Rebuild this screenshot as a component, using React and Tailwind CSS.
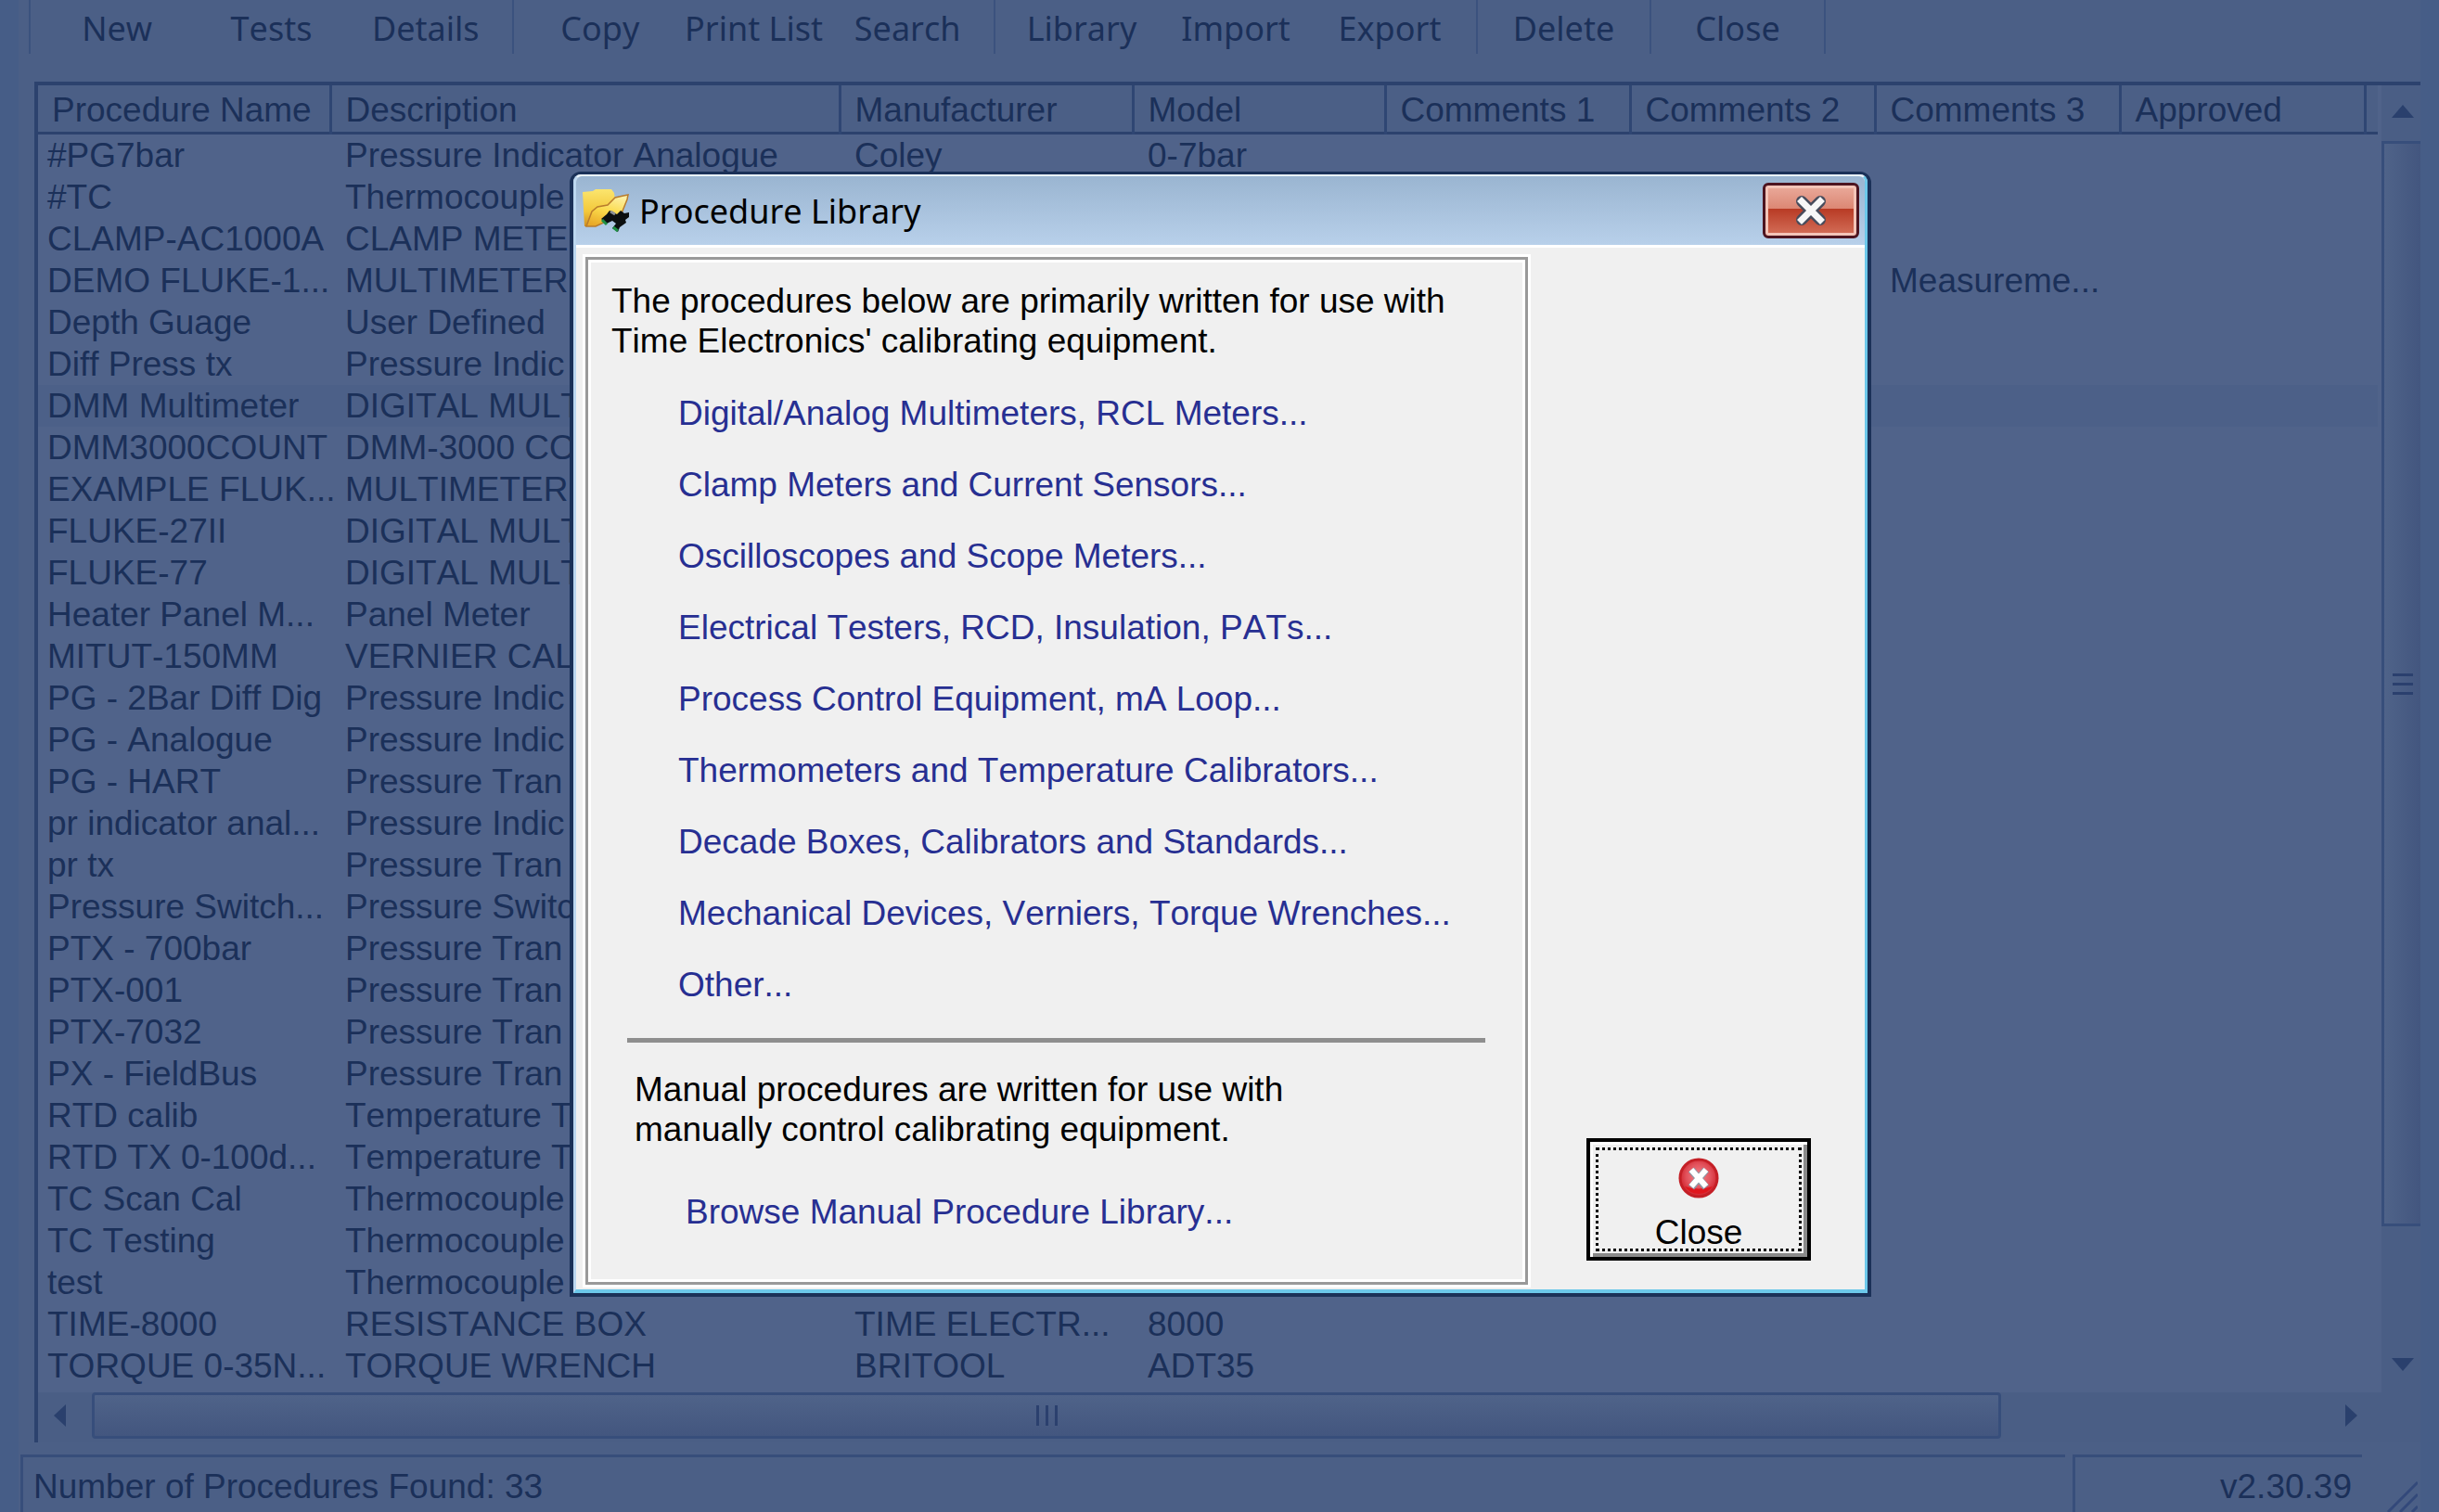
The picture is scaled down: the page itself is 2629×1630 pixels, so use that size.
import React from 'react';
import clsx from 'clsx';

const SANS = "font-['Liberation_Sans',Arial,sans-serif]";
const UI = "font-['Noto_Sans','Open_Sans',sans-serif]";

const TOOL_GROUPS = [
  { width: 'w-[521px]', items: ['New', 'Tests', 'Details'] },
  { width: 'w-[519px]', items: ['Copy', 'Print List', 'Search'] },
  { width: 'w-[520px]', items: ['Library', 'Import', 'Export'] },
  { width: 'w-[187px]', items: ['Delete'] },
  { width: 'w-[188px]', items: ['Close'] },
];

const COLUMNS = [
  { label: 'Procedure Name', width: 'w-[315px]' },
  { label: 'Description', width: 'w-[549px]' },
  { label: 'Manufacturer', width: 'w-[316px]' },
  { label: 'Model', width: 'w-[272px]' },
  { label: 'Comments 1', width: 'w-[264px]' },
  { label: 'Comments 2', width: 'w-[264px]' },
  { label: 'Comments 3', width: 'w-[264px]' },
  { label: 'Approved', width: 'w-[264px]' },
];

const PROCEDURES = [
  ['#PG7bar', 'Pressure Indicator Analogue', 'Coley', '0-7bar'],
  ['#TC', 'Thermocouple'],
  ['CLAMP-AC1000A', 'CLAMP METER'],
  ['DEMO FLUKE-1...', 'MULTIMETER', '', '', '', '', 'Measureme...'],
  ['Depth Guage', 'User Defined'],
  ['Diff Press tx', 'Pressure Indic'],
  ['DMM Multimeter', 'DIGITAL MULT'],
  ['DMM3000COUNT', 'DMM-3000 CO'],
  ['EXAMPLE FLUK...', 'MULTIMETER'],
  ['FLUKE-27II', 'DIGITAL MULT'],
  ['FLUKE-77', 'DIGITAL MULT'],
  ['Heater Panel M...', 'Panel Meter'],
  ['MITUT-150MM', 'VERNIER CAL'],
  ['PG - 2Bar Diff Dig', 'Pressure Indic'],
  ['PG - Analogue', 'Pressure Indic'],
  ['PG - HART', 'Pressure Tran'],
  ['pr indicator anal...', 'Pressure Indic'],
  ['pr tx', 'Pressure Tran'],
  ['Pressure Switch...', 'Pressure Switc'],
  ['PTX - 700bar', 'Pressure Tran'],
  ['PTX-001', 'Pressure Tran'],
  ['PTX-7032', 'Pressure Tran'],
  ['PX - FieldBus', 'Pressure Tran'],
  ['RTD calib', 'Temperature T'],
  ['RTD TX 0-100d...', 'Temperature T'],
  ['TC Scan Cal', 'Thermocouple'],
  ['TC Testing', 'Thermocouple'],
  ['test', 'Thermocouple'],
  ['TIME-8000', 'RESISTANCE BOX', 'TIME ELECTR...', '8000'],
  ['TORQUE 0-35N...', 'TORQUE WRENCH', 'BRITOOL', 'ADT35'],
];

const SELECTED = 'DMM Multimeter';

const CATEGORIES = [
  'Digital/Analog Multimeters, RCL Meters...',
  'Clamp Meters and Current Sensors...',
  'Oscilloscopes and Scope Meters...',
  'Electrical Testers, RCD, Insulation, PATs...',
  'Process Control Equipment, mA Loop...',
  'Thermometers and Temperature Calibrators...',
  'Decade Boxes, Calibrators and Standards...',
  'Mechanical Devices, Verniers, Torque Wrenches...',
  'Other...',
];

const FolderIcon = () => (
  <svg viewBox="0 0 52 48" className="h-12 w-[52px]" aria-hidden="true">
    <defs>
      <linearGradient id="folderBack" x1="0" y1="0" x2="0" y2="1">
        <stop offset="0" stopColor="#fbe56e" />
        <stop offset="0.6" stopColor="#f3c83a" />
        <stop offset="1" stopColor="#cf8f22" />
      </linearGradient>
      <linearGradient id="folderFront" x1="0.7" y1="0" x2="0.3" y2="1">
        <stop offset="0" stopColor="#fdf0a6" />
        <stop offset="0.5" stopColor="#fbdb4c" />
        <stop offset="1" stopColor="#e9a928" />
      </linearGradient>
    </defs>
    <path d="M1 4 L12 3 L15 1 L32 1 L35 5 L36 12 L14 28 L5 41 L3 41 Z" fill="url(#folderBack)" />
    <path d="M5 41 L11 25 L17 20 L28 18 L36 10 L45 8 L50 7 L49 12 L43 27 L30 34 L15 41 Z" fill="url(#folderFront)" stroke="#b97c2c" strokeWidth="1.5" />
    <path d="M21 33 L27 28 L30 24 L34 26 L38 28 L42 24 L46 27 L51 26 L51 31 L47 34 L48 37 L41 42 L39 47 L33 43 L37 38 L33 35 L27 38 Z" fill="#0c0f10" />
    <path d="M22 34 L27 39 M34 42 L39 46" stroke="#1f8f45" strokeWidth="3" />
    <path d="M31 25 L36 28" stroke="#8a8f94" strokeWidth="3" />
  </svg>
);

const TitleCloseIcon = () => (
  <svg viewBox="0 0 36 32" className="h-8 w-9" aria-hidden="true">
    <path d="M8 6 L28 26 M28 6 L8 26" stroke="#474c5c" strokeWidth="12" strokeLinecap="round" />
    <path d="M8 6 L28 26 M28 6 L8 26" stroke="#f7f7f7" strokeWidth="7" strokeLinecap="square" />
  </svg>
);

const CancelIcon = () => (
  <svg viewBox="0 0 44 44" className="size-11" aria-hidden="true">
    <defs>
      <radialGradient id="cancel" cx="0.5" cy="0.45" r="0.55">
        <stop offset="0" stopColor="#f4848c" />
        <stop offset="0.6" stopColor="#e2525c" />
        <stop offset="1" stopColor="#cf1f28" />
      </radialGradient>
    </defs>
    <circle cx="22" cy="22" r="20" fill="url(#cancel)" stroke="#c41f26" strokeWidth="3" />
    <path d="M7 31 A18 18 0 0 0 37 31 Q22 36 7 31 Z" fill="#e0161d" />
    <path d="M14 13 L30 32 M30 13 L14 32" stroke="#8d98a5" strokeWidth="8" />
    <path d="M14 13 L30 31 M30 13 L14 31" stroke="#fff" strokeWidth="6" />
  </svg>
);

const Arrow = ({ points }) => (
  <svg viewBox="0 0 24 24" className="size-6 fill-[#2a406d]" aria-hidden="true">
    <polygon points={points} />
  </svg>
);

const Toolbar = () => (
  <nav className={clsx('flex h-[88px] pl-[11px] text-[36px]', UI)}>
    <div className="flex h-[58px] border-l-2 border-[#3b527e]">
      {TOOL_GROUPS.map((group) => (
        <div
          key={group.items[0]}
          className={clsx('flex items-center border-r-2 border-[#3b527e] px-2.5 pt-1', group.width)}
        >
          {group.items.map((item) => (
            <button key={item} type="button" className="flex-1 whitespace-nowrap">
              {item}
            </button>
          ))}
        </div>
      ))}
    </div>
  </nav>
);

const ProcedureTable = () => (
  <table className="w-full table-fixed border-collapse text-left">
    <thead>
      <tr className="h-[51px] border-b-3 border-[#2c426e] bg-[#4b5f86]">
        {COLUMNS.map((col) => (
          <th
            key={col.label}
            className={clsx('border-r-3 border-[#2f4673] p-0 pt-1 pl-[15px] leading-[46px] font-normal', col.width)}
          >
            {col.label}
          </th>
        ))}
        <th aria-hidden="true" />
      </tr>
    </thead>
    <tbody>
      {PROCEDURES.map((row) => (
        <tr key={row[0]} className={clsx('h-[45px]', row[0] === SELECTED && 'bg-[#4c6088]')}>
          {COLUMNS.map((col, i) => (
            <td
              key={col.label}
              className={clsx('p-0 leading-[45px] whitespace-nowrap', i === 0 ? 'pl-2.5' : 'pl-4')}
            >
              {row[i]}
            </td>
          ))}
          <td />
        </tr>
      ))}
    </tbody>
  </table>
);

const VerticalScrollbar = () => (
  <div className="flex w-[42px] flex-col items-center bg-[#4a5e85]">
    <button type="button" aria-label="Scroll up" className="flex h-[60px] items-center pl-1">
      <Arrow points="12,3 24,17 0,17" />
    </button>
    <div className="flex h-[1170px] w-full flex-col items-center justify-center gap-[7px] border-3 border-r-0 border-[#374e7b] bg-linear-to-r from-[#4f6389] to-[#43567f]">
      <span className="h-[3px] w-[22px] bg-[#2b406e]" />
      <span className="h-[3px] w-[22px] bg-[#2b406e]" />
      <span className="h-[3px] w-[22px] bg-[#2b406e]" />
    </div>
    <button type="button" aria-label="Scroll down" className="mt-auto flex h-[60px] items-center pl-1">
      <Arrow points="0,5 24,5 12,19" />
    </button>
  </div>
);

const HorizontalScrollbar = () => (
  <div className="flex h-[54px] items-start bg-[#4a5e85]">
    <button type="button" aria-label="Scroll left" className="flex h-[50px] w-[58px] items-center justify-center pr-2.5">
      <Arrow points="18,0 18,24 5,12" />
    </button>
    <div className="flex h-[50px] w-[2058px] items-center justify-center gap-[7px] rounded-sm border-3 border-[#374e7b] bg-linear-to-b from-[#4f6389] to-[#43567f]">
      <span className="h-[22px] w-[3px] bg-[#2b406e]" />
      <span className="h-[22px] w-[3px] bg-[#2b406e]" />
      <span className="h-[22px] w-[3px] bg-[#2b406e]" />
    </div>
    <button type="button" aria-label="Scroll right" className="mr-[62px] ml-auto flex h-[50px] items-center">
      <Arrow points="5,0 18,12 5,24" />
    </button>
  </div>
);

const StatusBar = () => (
  <footer className="flex h-[62px] pl-[2px]">
    <div className="flex flex-1 items-center border-t-3 border-l-3 border-[#374e7b] pt-1 pl-[11px]">
      Number of Procedures Found: 33
    </div>
    <div className="ml-2 flex w-[312px] items-center justify-end border-t-3 border-l-3 border-[#374e7b] pt-1 pr-[11px]">
      v2.30.39
    </div>
    <svg viewBox="0 0 36 34" className="mr-[3px] ml-6 h-[34px] w-9 self-end stroke-[#33497a] stroke-3" aria-hidden="true">
      <path d="M4 34 L36 2 M17 34 L36 15 M30 34 L36 28" />
    </svg>
  </footer>
);

const LibraryDialog = () => (
  <div
    role="dialog"
    aria-labelledby="dialog-title"
    className="absolute top-[185px] left-[594px] flex h-[1213px] w-[1403px] flex-col rounded-t-xl border-4 border-t-3 border-[#1b3158] bg-[#f0f0f0] text-black"
  >
    <div className="flex flex-1 flex-col rounded-t-lg border-x-3 border-t-2 border-b-4 border-[#6cc8ea] border-t-[#e9f3fb] border-l-[#bcd7f0]">
      <header className="flex h-[74px] items-center rounded-t-md bg-linear-to-b from-[#9ab5d1] to-[#b8d0ea] pr-[6px] pl-1.5">
        <FolderIcon />
        <h1 id="dialog-title" className={clsx('ml-2.5 pt-0.5 text-[36px]', UI)}>
          Procedure Library
        </h1>
        <button
          type="button"
          aria-label="Close window"
          className="ml-auto flex h-[60px] w-[104px] items-center justify-center rounded-md border-3 border-[#4d1420] bg-[linear-gradient(#eaab9c_0%,#dc8774_46%,#b83a24_46%,#d4705a_100%)] shadow-[inset_0_0_0_3px_#f3c4b8]"
        >
          <TitleCloseIcon />
        </button>
      </header>

      <div className="flex flex-1 border-t-3 border-white pt-2.5 pb-[5px] pl-[10px]">
        <section className="w-[1016px] border-3 border-[#999] pt-[23px] pl-[25px] shadow-[0_0_0_3px_#fff,inset_0_0_0_3px_#fff]">
          <p className="leading-[43px]">
            The procedures below are primarily written for use with
            <br />
            Time Electronics' calibrating equipment.
          </p>
          <ul className="mt-[18px] pl-[72px] text-[#272f92]">
            {CATEGORIES.map((name) => (
              <li key={name} className="leading-[77px]">
                <a href="#">{name}</a>
              </li>
            ))}
          </ul>
          <hr className="mt-[19px] mr-[43px] ml-[17px] border-t-5 border-[#8e8e8e]" />
          <p className="mt-[29px] pl-[25px] leading-[43px]">
            Manual procedures are written for use with
            <br />
            manually control calibrating equipment.
          </p>
          <a href="#" className="mt-[46px] ml-20 block leading-[43px] text-[#272f92]">
            Browse Manual Procedure Library...
          </a>
        </section>

        <button
          type="button"
          className="mr-[58px] mb-[26px] ml-auto flex h-[132px] w-[242px] self-end border-4 border-black p-1.5 shadow-[inset_3px_3px_0_#fff,inset_-4px_-4px_0_#8a8a8a]"
        >
          <span className="flex h-full w-full flex-col items-center justify-between border-3 border-dotted border-black pt-2">
            <CancelIcon />
            <span className="leading-[34px]">Close</span>
          </span>
        </button>
      </div>
    </div>
  </div>
);

export default function App() {
  return (
    <div
      className={clsx(
        'relative flex min-h-screen flex-col overflow-hidden border-x-[20px] border-[#465d87] bg-[#4b5f86] text-[37px] text-[#1b3059] [font-kerning:none]',
        SANS
      )}
    >
      <Toolbar />
      <main className="mb-[13px] ml-[17px] flex flex-1 flex-col border-t-4 border-l-4 border-[#2c426e] bg-[#50638a]">
        <div className="flex flex-1">
          <div className="flex-1 pr-1">
            <ProcedureTable />
          </div>
          <VerticalScrollbar />
        </div>
        <HorizontalScrollbar />
      </main>
      <StatusBar />
      <LibraryDialog />
    </div>
  );
}
